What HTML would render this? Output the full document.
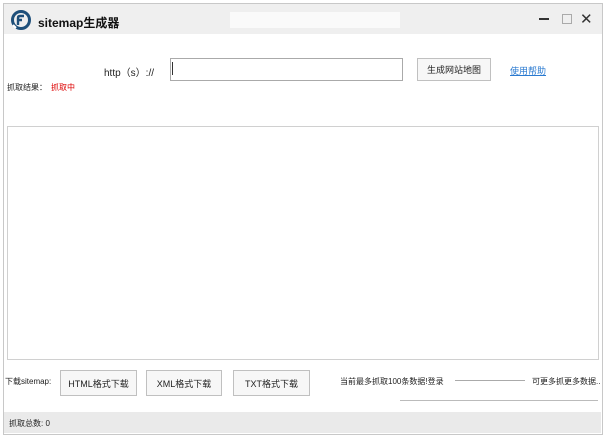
<!DOCTYPE html>
<html><head><meta charset="utf-8"><style>
body{margin:0;width:610px;height:437px;background:#fff;position:relative;font-family:"Liberation Sans","Noto Sans CJK SC",sans-serif;overflow:hidden}
.a{position:absolute}
.t{font-size:9px;color:#222;white-space:nowrap}
.btn{position:absolute;border:1px solid #c0c0c0;background:#f7f7f7;font-size:9px;color:#222;display:flex;align-items:center;justify-content:center;box-sizing:border-box;white-space:nowrap}
</style></head><body>
<div class="a" style="left:3px;top:3px;width:598px;height:430px;border:1px solid #c8c8c8"></div>
<div class="a" style="left:4px;top:4px;width:598px;height:30px;background:#efefef"></div>
<div class="a" style="left:230px;top:12px;width:170px;height:16px;background:#fafafa"></div>
<svg class="a" style="left:10px;top:9px" width="22" height="22" viewBox="0 0 22 22"><circle cx="11" cy="11" r="8.5" fill="none" stroke="#1e4f7a" stroke-width="3"/><path d="M8 16 L8 9 Q8 7 10 7 L14 7 M8 11 L12 11" stroke="#1e4f7a" stroke-width="2.4" fill="none"/><path d="M3 16 L6 19" stroke="#fff" stroke-width="2"/></svg>
<div class="a" style="left:38px;top:14px;font-size:12px;font-weight:bold;color:#111">sitemap生成器</div>
<div class="a" style="left:539px;top:18px;width:10px;height:2px;background:#333"></div>
<div class="a" style="left:562px;top:14px;width:8px;height:8px;border:1px solid #aaa"></div>
<div class="a" style="left:580px;top:10px;font-size:15px;color:#333">✕</div>
<div class="a t" style="left:104px;top:64px;font-size:10px">http（s）://</div>
<div class="a" style="left:170px;top:58px;width:231px;height:21px;border:1px solid #aaa;background:#fff"></div>
<div class="a" style="left:172px;top:62px;width:1px;height:13px;background:#333"></div>
<div class="btn" style="left:417px;top:58px;width:74px;height:23px">生成网站地图</div>
<div class="a t" style="left:510px;top:64px;color:#2a7ad0;text-decoration:underline">使用帮助</div>
<div class="a t" style="left:7px;top:82px;font-size:8px">抓取结果：</div>
<div class="a t" style="left:51px;top:82px;font-size:8px;color:#d00">抓取中</div>
<div class="a" style="left:7px;top:126px;width:590px;height:232px;border:1px solid #d0d0d0"></div>
<div class="a t" style="left:5px;top:376px;font-size:8px">下载sitemap:</div>
<div class="btn" style="left:60px;top:370px;width:77px;height:26px">HTML格式下载</div>
<div class="btn" style="left:146px;top:370px;width:76px;height:26px">XML格式下载</div>
<div class="btn" style="left:233px;top:370px;width:77px;height:26px">TXT格式下载</div>
<div class="a t" style="left:340px;top:376px;font-size:8px">当前最多抓取100条数据!登录</div>
<div class="a" style="left:455px;top:380px;width:70px;height:1px;background:#aaa"></div>
<div class="a t" style="left:532px;top:376px;font-size:8px">可更多抓更多数据..</div>
<div class="a" style="left:400px;top:400px;width:198px;height:1px;background:#bbb"></div>
<div class="a" style="left:4px;top:412px;width:597px;height:21px;background:#eaeaea"></div>
<div class="a t" style="left:9px;top:418px;font-size:8px">抓取总数: 0</div>
</body></html>
